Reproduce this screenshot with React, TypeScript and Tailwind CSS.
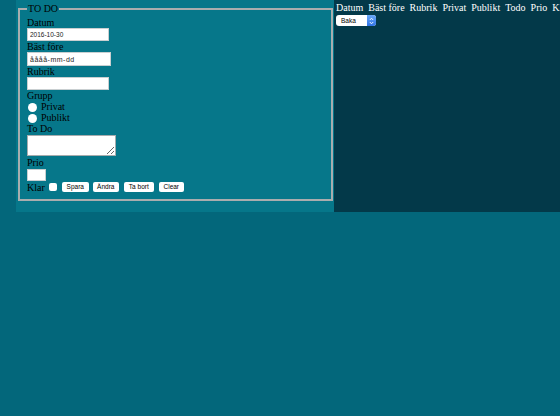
export default function App() {
  const headers = ["Datum", "Bäst före", "Rubrik", "Privat", "Publikt", "Todo", "Prio", "Klar"];
  const sans = "font-['Liberation_Sans',Arial,sans-serif]";

  return (
    <div className="min-h-[416px] w-[560px] bg-[#03677b] font-['Liberation_Serif','Times_New_Roman',serif] text-[10px] leading-[11px] text-black">
      <div className="flex h-[212px]">
        {/* Form column */}
        <div className="ml-[16px] w-[318px] bg-[#06778a] pl-[2px] pt-[3px]">
          <fieldset className="flex h-[198px] w-[315px] flex-col items-start border-2 border-[#a9adae] px-[7px] pt-[2px]">
            <legend className="px-[1px] leading-[12px]">TO DO</legend>

            <label className="h-[11px]">Datum</label>
            <input
              readOnly
              value="2016-10-30"
              className={`h-[13px] w-[82px] border border-[#c9cfd1] bg-white px-[2px] text-[6.5px] text-[#222] outline-none ${sans}`}
            />

            <label className="h-[11px]">Bäst före</label>
            <input
              readOnly
              value="åååå-mm-dd"
              className={`h-[14px] w-[84px] border border-[#c9cfd1] bg-white px-[2px] text-[7px] tracking-[0.5px] text-[#222] outline-none ${sans}`}
            />

            <label className="h-[11px]">Rubrik</label>
            <input readOnly className="h-[13px] w-[82px] border border-[#c9cfd1] bg-white outline-none" />

            <label className="h-[11px]">Grupp</label>
            <div className="flex h-[11px] items-center">
              <span className="ml-[1px] mr-[4px] mt-[1px] h-[9px] w-[9px] rounded-full bg-white" />
              <span>Privat</span>
            </div>
            <div className="flex h-[11px] items-center">
              <span className="ml-[1px] mr-[4px] mt-[1px] h-[9px] w-[9px] rounded-full bg-white" />
              <span>Publikt</span>
            </div>

            <label className="h-[11px]">To Do</label>
            <textarea
              readOnly
              className="mt-[1px] h-[21px] w-[89px] resize border border-[#a7acae] bg-white outline-none"
            />

            <label className="mt-[1px] h-[11px]">Prio</label>
            <input readOnly className="mt-[1px] h-[12px] w-[19px] border border-[#c9cfd1] bg-white outline-none" />

            <div className="flex h-[12px] items-center">
              <span className="mr-[4px]">Klar</span>
              <span className="mr-[5px] h-[8px] w-[8px] rounded-[2px] bg-white" />
              <div className={`flex gap-[4px] text-[6.5px] leading-[10px] ${sans}`}>
                <button className="h-[10px] w-[27px] rounded-[2px] bg-white text-black">Spara</button>
                <button className="h-[10px] w-[26px] rounded-[2px] bg-white text-black">Ändra</button>
                <button className="ml-[1px] h-[10px] w-[30px] rounded-[2px] bg-white text-black">Ta bort</button>
                <button className="ml-[1px] h-[10px] w-[25px] rounded-[2px] bg-white text-black">Clear</button>
              </div>
            </div>
          </fieldset>
        </div>

        {/* List column */}
        <div className="flex min-w-0 flex-1 flex-col overflow-hidden bg-[#033949] pl-[2px] pt-[2px]">
          <div className="flex gap-[5px] whitespace-nowrap leading-[12px] text-white">
            {headers.map((h) => (
              <span key={h}>{h}</span>
            ))}
          </div>
          <div className="mt-[1px] flex h-[11px] w-[40px] items-center overflow-hidden rounded-[3px] bg-white">
            <span className={`flex-1 pl-[5px] text-[6.5px] leading-[11px] text-black ${sans}`}>Baka</span>
            <span className="flex h-[11px] w-[9px] flex-col items-center justify-center bg-gradient-to-b from-[#6aa8f7] to-[#2f73e6]">
              <svg width="5" height="8" viewBox="0 0 5 8">
                <path d="M0.8 3 L2.5 1.2 L4.2 3" fill="none" stroke="white" strokeWidth="0.9" />
                <path d="M0.8 5 L2.5 6.8 L4.2 5" fill="none" stroke="white" strokeWidth="0.9" />
              </svg>
            </span>
          </div>
        </div>
      </div>
    </div>
  );
}
